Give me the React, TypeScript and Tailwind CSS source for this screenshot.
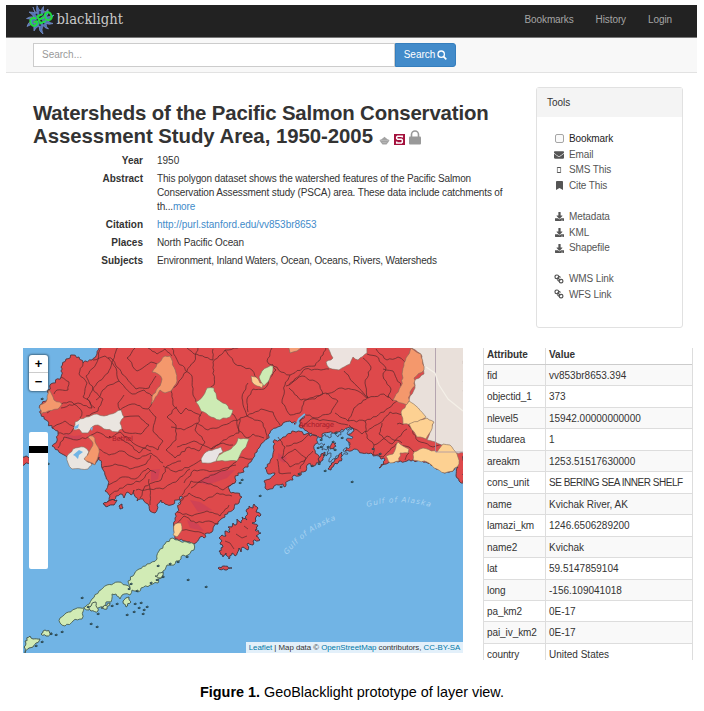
import React from "react";
import { FaEnvelope, FaBookmark, FaDownload, FaLock } from "react-icons/fa";

type Pt = [number, number];

// "x,y x,y ..." -> points
const parse = (s: string): Pt[] =>
  s.trim().split(/\s+/).map((p) => p.split(",").map(Number) as Pt);

// Subdivides every segment and displaces the new points, so borders look surveyed
function rough(s: string, amp: number, closed: boolean, step = 3): string {
  const pts = parse(s);
  const out: string[] = [];
  const n = closed ? pts.length : pts.length - 1;
  for (let i = 0; i < n; i++) {
    const [ax, ay] = pts[i];
    const [bx, by] = pts[(i + 1) % pts.length];
    const len = Math.hypot(bx - ax, by - ay) || 1;
    const k = Math.max(1, Math.round(len / step));
    for (let j = 0; j < k; j++) {
      const t = j / k;
      const x = ax + (bx - ax) * t;
      const y = ay + (by - ay) * t;
      const h = Math.sin(x * 12.9898 + y * 78.233) * 43758.5453;
      const r = j === 0 ? 0 : (h - Math.floor(h) - 0.5) * 2 * amp;
      out.push(`${(x - ((by - ay) / len) * r).toFixed(1)},${(y + ((bx - ax) / len) * r).toFixed(1)}`);
    }
  }
  if (!closed) out.push(pts[pts.length - 1].join(","));
  return out.join(" ");
}

const LAND =
  "101,346 97,354 92,360 83,363 79,357 73,355 66,359 61,367 61,377 53,383 48,390 47,400 40,405 41,414 46,420 52,428 58,431 57,441 52,446 58,450 67,457 80,452 86,462 95,464 99,457 102,468 106,477 108,485 105,491 110,496 107,502 114,500 120,494 124,498 127,492 131,495 134,490 137,501 143,499 148,504 150,511 155,513 157,505 161,500 165,504 171,505 177,500 182,496 178,508 175,518 174,530 175,539 185,541 194,544 200,537 204,538 207,533 212,532 214,526 218,524 221,519 225,517 228,512 234,509 235,504 239,503 242,497 237,493 231,493 228,487 232,484 235,483 235,478 238,473 244,472 245,467 248,467 252,460 257,452 261,444 267,439 270,433 276,428 283,423 290,421 297,423 304,415 299,426 307,431 317,436 306,434 292,431 283,437 273,442 274,450 271,459 265,468 268,474 275,473 270,479 264,481 265,488 270,489 274,486 279,485 283,484 285,487 288,481 293,480 294,475 299,476 301,472 306,471 308,464 314,466 319,463 319,456 314,449 317,443 324,433 338,432 350,427 354,431 346,437 350,445 345,451 354,449 362,453 371,453 380,457 385,460 379,468 388,463 398,462 407,461 417,461 428,463 436,469 445,473 453,471 458,467 456,476 459,481 464,483 464,346";

const SOUND =
  "318,436 322,439 325,434 329,438 333,433 338,437 344,430 353,428 347,434 353,437 346,440 350,447 343,450 348,454 336,456 329,462 331,453 326,456 328,448 322,450 325,444 318,444";

const PENINSULA =
  "173,538 180,541 187,542 194,544 194,550 188,555 183,555 181,559 176,561 174,565 167,565 163,571 163,577 158,579 158,583 150,585 141,588 138,592 132,590 130,595 124,594 120,599 116,594 112,594 111,602 106,602 104,607 98,608 95,609 94,603 89,610 84,608 82,619 73,621 65,626 60,623 60,618 66,613 75,609 85,607 92,599 99,591 107,585 118,582 126,585 130,588 128,581 133,576 139,569 147,564 157,559 159,551 165,544";

const REGIONS: { fill: string; pts: string }[] = [
  { fill: "#eae5e0", pts: "75,422 86,417 97,414 104,416 121,410 124,417 120,423 122,429 118,432 104,429 98,425 92,427 88,433 82,433 79,429 74,430" },
  { fill: "#eae5e0", pts: "67,456 73,449 84,447 89,452 86,460 92,465 88,469 72,469 68,463" },
  { fill: "#f4986c", pts: "48,390 50,391 54,400 62,404 58,409 48,411 41,414 40,405 46,402" },
  { fill: "#f4986c", pts: "88,437 93,436 99,449 98,457 95,465 84,459 90,450 93,443" },
  { fill: "#f4986c", pts: "152,372 157,364 165,356 170,356 176,373 177,381 171,391 165,393 160,390 153,402 151,404 152,397 160,386 162,379 158,374" },
  { fill: "#cdebb4", pts: "196,402 203,396 207,388 214,388 217,399 226,404 229,409 233,410 230,417 223,418 220,420 211,417 201,411" },
  { fill: "#fdcc90", pts: "251,376 256,377 260,383 264,383 262,388 257,386 252,382" },
  { fill: "#cdebb4", pts: "259,377 262,371 268,367 273,366 273,370 268,382 264,386 261,382" },
  { fill: "#e8e3e3", pts: "201,459 206,452 215,449 221,447 223,452 219,454 218,460 211,463 202,463" },
  { fill: "#cdebb4", pts: "216,461 219,455 229,450 235,445 238,438 249,439 246,447 241,453 237,461 228,461" },
  { fill: "#ece3df", pts: "326,346 330,352 333,358 326,362 329,368 339,370 350,364 353,357 358,360 367,353 367,346" },
  { fill: "#f4a078", pts: "288,346 303,346 297,351 290,353" },
  { fill: "#e9e0da", pts: "410,346 422,356 424,374 414,381 415,388 408,402 425,419 433,422 427,440 446,446 456,453 464,453 464,346" },
  { fill: "#f4986c", pts: "411,348 421,354 424,370 414,378 415,386 410,392 408,406 393,400 401,386 403,378 402,374 404,363" },
  { fill: "#fdd192", pts: "409,401 416,406 426,417 419,421 413,425 403,424 401,412" },
  { fill: "#fdd192", pts: "409,424 420,420 427,418 434,422 431,431 426,439 417,437" },
  { fill: "#fdd192", pts: "398,442 403,446 409,449 408,453 400,453 399,461 390,463 386,456 393,454" },
  { fill: "#fdd192", pts: "414,452 423,448 437,452 443,444 450,445 457,454 459,464 453,471 445,473 434,468 427,462 413,460" },
  { fill: "#fdd192", pts: "175,524 181,523 182,530 177,537 173,535" },
];

const BORDERS = [
  "83,363 79,374 87,383 83,397 90,402 92,408 78,403 61,408",
  "101,348 96,364 86,376 93,389 103,399 98,411 86,416",
  "61,377 69,382 68,390 57,390 54,394",
  "47,413 61,404 72,402 82,412 80,418",
  "52,428 65,421 75,427 69,434 58,433",
  "58,448 64,437 77,440 88,437 97,432 109,438 120,432 136,445 151,451",
  "93,360 105,356 113,360 108,373 97,383 87,399 95,408",
  "108,358 116,368 119,381 107,386 96,400",
  "118,347 113,360 122,374 136,389 149,388 156,376",
  "119,381 132,394 144,390 152,396",
  "135,348 127,358 137,371 151,362 157,364",
  "148,348 157,354 165,349 172,356",
  "124,395 118,403 120,410 132,404 148,409 152,402",
  "124,417 139,416 149,425 141,434 124,432 121,428",
  "149,409 156,417 153,431 163,441 158,450 147,445 139,453 128,443 119,438",
  "99,449 109,455 122,451 137,459 151,453 163,463",
  "102,468 115,464 130,469 146,464 151,455",
  "108,485 122,477 135,479 148,468 156,473",
  "110,495 125,486 142,480 151,470",
  "136,490 150,489 149,479",
  "140,498 145,486 161,480 167,466 181,461",
  "150,505 150,489 163,489 178,480 190,469",
  "172,348 178,362 192,376 193,395 196,402",
  "198,347 194,362 179,381 171,391 173,405 181,414 186,408 201,416",
  "187,348 194,354 213,360 213,349",
  "240,347 225,350 213,362 214,385 207,392",
  "225,350 235,364 252,370 257,378",
  "272,348 267,361 276,370 264,389 253,389 247,399 248,412",
  "248,383 242,398 247,416 261,409 273,412 280,425",
  "240,418 247,416 263,423 267,439",
  "240,418 239,431 247,438 253,434 264,438",
  "229,409 237,420 239,433 231,436 211,449",
  "202,412 195,430 205,442 199,451 189,447 175,458 166,450 176,440 176,425 167,417 177,407",
  "171,427 184,430 197,423 208,430 221,426 240,419",
  "177,447 194,441 211,449 223,443 233,445",
  "163,466 176,472 191,466 201,460",
  "184,483 194,470 216,471 231,466 240,457 252,459",
  "191,488 205,478 219,472 236,465",
  "182,495 191,481 211,484 223,490 233,483",
  "178,504 189,493 204,501 217,493 232,496",
  "177,512 192,516 207,511 220,516 229,505",
  "174,525 184,516 196,523 209,521 218,524",
  "180,530 192,531 204,534",
  "272,364 281,372 290,375 285,385 282,403 290,415 300,413",
  "290,375 305,367 315,366 323,355 326,347",
  "289,385 305,369 321,370 329,369",
  "286,386 302,376 318,383 323,394 315,399 301,400 289,388",
  "300,413 304,401 316,396 326,393 338,401 331,413 315,418 304,414",
  "326,394 342,388 358,391 368,398 384,394 393,401",
  "344,371 353,382 368,397 354,408 348,421 335,413",
  "363,358 371,367 365,383 368,398",
  "367,354 376,356 386,368 383,376 391,389 388,398",
  "376,349 387,360 398,357 406,363",
  "383,369 393,371 401,386",
  "348,421 365,421 384,412 398,400",
  "349,425 362,434 380,423 390,412 402,415",
  "365,421 367,438 374,445 387,436 402,443",
  "382,423 379,434 392,444 407,429",
  "397,424 408,423 418,441 433,447 443,444",
  "374,445 373,456 383,457 396,444 409,447 414,452",
  "409,453 405,460",
  "433,452 428,464",
  "442,449 434,463",
  "456,457 444,459 439,470",
  "278,437 285,447 282,458 290,467 304,461 313,451",
  "286,446 302,441 312,433",
  "281,458 295,449 306,458 300,469",
  "277,459 279,473 291,473",
  "302,427 311,419 332,421 348,425",
];

const ISLANDS_RED = [
  "246,511 249,506 253,508 254,504 258,508 256,512 261,515 256,517 256,521 252,523 258,526 255,530 261,533 256,536 260,540 253,541 253,545 248,543 248,550 243,547 241,552 239,548 235,556 232,553 229,559 226,553 223,557 219,551 223,547 220,544 222,541 219,538 222,535 226,536 225,531 230,532 228,527 232,527 233,523 236,525 237,519 241,523 242,517 247,520",
  "218,568 224,566 232,568 225,570",
  "103,504 111,500 117,500 114,505 105,506",
  "119,506 122,504 123,508 120,509",
  "328,469 335,459 342,452 342,459 334,465 331,470",
  "318,459 321,454 325,452 323,460 320,463",
  "330,449 333,442 336,443 334,449",
  "20,456 28,457 30,463 22,465",
];
const ISLANDS_GREEN = [
  "25,641 30,636 33,639 40,639 36,643 33,647 29,648 25,653",
  "41,634 45,630 52,633 46,636",
  "123,601 129,597 131,602 126,607",
  "88,607 96,602 98,611 91,611",
  "101,608 110,603 107,609",
  "155,576 163,572 161,578",
];
const ISLETS =
  "91,624 97,627 127,615 135,604 141,603 139,608 144,610 147,607 134,612 112,606 117,604 158,566 170,564 178,562 187,557 188,580 206,587 98,614 143,614 242,480 240,483 260,496 321,447 352,482 51,634 62,632 56,635 151,583 157,580 163,577 82,598 88,607 131,584 129,589 137,591 42,642 36,646 281,487 299,474 312,466 319,464 325,471 373,449 380,454 336,433 342,438 333,442 328,447 335,450 321,440 318,448 324,455 48,464 42,399";

const TOOLS = [
  [["check", "Bookmark"], ["mail", "Email"], ["phone", "SMS This"], ["mark", "Cite This"]],
  [["down", "Metadata"], ["down", "KML"], ["down", "Shapefile"]],
  [["link", "WMS Link"], ["link", "WFS Link"]],
];

const ROWS = [
  ["fid", "vv853br8653.394"], ["objectid_1", "373"], ["nlevel5", "15942.00000000000"],
  ["studarea", "1"], ["areakm", "1253.51517630000"], ["cons_unit", "SE BERING SEA INNER SHELF"],
  ["name", "Kvichak River, AK"], ["lamazi_km", "1246.6506289200"], ["name2", "Kvichak"],
  ["lat", "59.5147859104"], ["long", "-156.109041018"], ["pa_km2", "0E-17"],
  ["pai_iv_km2", "0E-17"], ["country", "United States"],
];

function Logo() {
  return (
    <svg className="h-8 w-[100px]" viewBox="26 5 100 32">
      <path
        d="M33 7Q34 12 37 13 36 9 37 5.500 38.500 10 41 11 42 8 43.500 6.500 43 10 44.500 12 47 11 48 9 49 14 46 17 50 17 54 15 50 20 47.500 20.500 50 23 53 23.500 49 25 46 23.500 46 27 48.500 29 44.500 28 43 25.500 41 30 43 34 38.500 31 39 26 36 27 34 31 33 27 35 24 31 24 27 26.500 28 22 32 21 29 18 26.500 18.500 30 16 34 17 32 14 29 12 33.500 12 35 13Z"
        fill="#5573b4" stroke="#7f9ddc" strokeWidth=".6"
      />
      <path d="M36 14 44 24M35 22l10-9M40 11v15" stroke="#222" strokeWidth="1.300" />
      <text x="31.500" y="27.500" transform="rotate(-22 31.500 27.500)" fontFamily="Liberation Sans, sans-serif" fontWeight="400" fontSize="12.500" textLength="24" lengthAdjust="spacingAndGlyphs" fill="#1fdc3f" stroke="#1fdc3f" strokeWidth=".9">GEO</text>
      <text x="56.500" y="24" fontFamily="DejaVu Serif, serif" fontSize="14.200" textLength="66.500" lengthAdjust="spacingAndGlyphs" fill="#c9c9c9">blacklight</text>
    </svg>
  );
}

function ToolIcon({ kind }: { kind: string }) {
  switch (kind) {
    case "check":
      return <span className="block size-[9px] rounded-[2px] border border-[#a5a5a5] bg-[#fafafa]" />;
    case "mail":
      return <FaEnvelope size={10} />;
    case "phone":
      return (
        <svg width="6" height="8" viewBox="0 0 6 8">
          <path d="M1 1.500h4M1 6.500h4" stroke="#555" strokeWidth="1.200" />
          <path d="M1.400 1v6M4.600 1v6" stroke="#777" strokeWidth=".8" />
        </svg>
      );
    case "mark":
      return <FaBookmark size={9} preserveAspectRatio="none" className="h-[9px] w-[7px]" />;
    case "down":
      return <FaDownload size={9} />;
    default:
      return (
        <svg width="10" height="10" viewBox="0 0 10 10" fill="none" stroke="#555" strokeWidth="1.200">
          <rect x="1" y="1" width="3.600" height="3.600" rx="1.600" />
          <rect x="5.300" y="5.300" width="3.600" height="3.600" rx="1.600" />
          <path d="M3.500 3.500 6.400 6.400M5 2.200l1.500 1.300M3.300 5.400l1.500 2" />
        </svg>
      );
  }
}

function MapView() {
  const islets = parse(ISLETS);
  return (
    <div className="relative h-[305px] w-[440px] shrink-0 overflow-hidden bg-[#71b4e5]">
      <svg className="block h-full w-full" viewBox="23 348 440 305" strokeLinejoin="round">
        <defs>
          <path id="gulfWest" d="M287 555Q307 529 341 518" />
          <path id="gulfEast" d="M367 507Q402 497 433 508" />
        </defs>
        <polygon points={rough(LAND, 1.5, true, 2.2)} fill="#de494b" stroke="#553238" strokeWidth=".9" />
        <g fill="#c43d5c" opacity=".55">
          <path d="M198 482l12-8 13-3 12-1-8 8-20 7ZM64 434l10 2 8-1-3 5-12-1ZM151 470l9-1-2 10-7 3ZM278 453l9 5-3 5-6-4ZM190 500l10 2 12 8-14 2ZM187 520l11 4 6 7-14-3Z" />
        </g>
        {BORDERS.map((b, i) => (
          <polyline key={i} points={rough(b, 0.9, false)} fill="none" stroke="#5d2b2e" strokeWidth=".75" />
        ))}
        {REGIONS.map((r, i) => (
          <polygon key={i} points={rough(r.pts, 0.8, true)} fill={r.fill} stroke="#80695a" strokeWidth=".6" />
        ))}
        <path d="M435.500 348V452H463" fill="none" stroke="#a795a4" strokeWidth=".8" />
        <path d="M426 367l9 6 4 12 9 14 15 12" fill="none" stroke="#f4f0e8" strokeWidth="1.200" />
        <path d="M74 427l5-3-1 4-3 1ZM73 455l6-5 4 2-4 3-1 4-3-3ZM90 428l3-1-1 4Z" fill="#71b4e5" />
        <path d="M297 423l2-4 6-5" fill="none" stroke="#71b4e5" strokeWidth="1.800" />
        <polygon points={rough(SOUND, 1.4, true, 2)} fill="#71b4e5" stroke="#3b4256" strokeWidth=".8" />
        <polygon points={rough(PENINSULA, 1.2, true, 2.5)} fill="#d1ebb5" stroke="#4b6152" strokeWidth=".9" />
        {ISLANDS_RED.map((s, i) => (
          <polygon key={i} points={rough(s, 1.2, true, 1.8)} fill="#de494b" stroke="#3f303c" strokeWidth=".9" />
        ))}
        {ISLANDS_GREEN.map((s, i) => (
          <polygon key={i} points={rough(s, 1.2, true, 2)} fill="#d1ebb5" stroke="#3f5148" strokeWidth=".9" />
        ))}
        <path d="M225 541l5 2 4 6M236 534l6 4 5-2M244 526l4 3" fill="none" stroke="#5d2b2e" strokeWidth=".7" />
        {islets.map(([x, y], i) => (
          <path key={i} d={`M${x - 1.2} ${y}l1.500-.9 1.200.8-1.500 1Z`} fill="#4a6b62" stroke="#25404e" strokeWidth=".8" />
        ))}
        <g fontFamily="DejaVu Sans, sans-serif" fontSize="7" fill="#a51d2b">
          <text x="299" y="427" textLength="35">Anchorage</text>
          <text x="112" y="440.500" textLength="21">Bethel</text>
        </g>
        <path d="M294 423h1.500v1.500H294ZM109 436h1.500v1.500H109Z" fill="#7b1823" />
        <g fontFamily="DejaVu Sans, sans-serif" fontStyle="italic" fontSize="7.500" fill="#a9d3f1">
          <text textLength="61"><textPath href="#gulfWest">Gulf of Alaska</textPath></text>
          <text textLength="64"><textPath href="#gulfEast">Gulf of Alaska</textPath></text>
        </g>
      </svg>
      <div className="absolute left-[6px] top-[7px] h-[36px] w-[19px] rounded-[3px] bg-white text-center text-[13px] font-bold leading-[18px] text-black shadow-[0_0_2px_1px_rgba(0,0,0,0.4)]">
        <div className="h-[18px] border-b border-[#ccc]">+</div>
        <div className="h-[18px] leading-[17px]">−</div>
      </div>
      <div className="absolute left-[6px] top-[84px] h-[137px] w-[19px] rounded-[2px] bg-white pt-[14px]">
        <div className="h-[7px] bg-black" />
      </div>
      <div className="absolute bottom-0 right-0 flex h-[11px] w-[217px] items-center justify-center whitespace-pre bg-white/80 text-[7.9px] tracking-[-0.04px] text-[#333]">
        <span className="text-[#0078a8]">Leaflet</span> | Map data © <span className="text-[#0078a8]">OpenStreetMap</span> contributors, <span className="text-[#0078a8]">CC-BY-SA</span>
      </div>
    </div>
  );
}

function Field({ name, children }: { name: string; children: React.ReactNode }) {
  return (
    <div className="mb-1 flex">
      <dt className="w-[110px] shrink-0 text-right font-bold">{name}</dt>
      <dd className="ml-[14px] whitespace-nowrap">{children}</dd>
    </div>
  );
}

export default function App() {
  return (
    <div className="h-[711px] w-[704px] overflow-hidden bg-white pt-[5px] font-['Liberation_Sans',Arial,sans-serif] text-[10px] leading-[14px] text-[#333]">
      <div className="ml-[6px] w-[691px]">
        <header className="flex h-[33px] items-start justify-between border-b border-[#777] bg-[#222] pl-5 pr-[25px]">
          <Logo />
          <nav className="flex gap-[22px] pt-2 tracking-[-0.1px] text-[#a5a5a5]">
            <a>Bookmarks</a>
            <a>History</a>
            <a>Login</a>
          </nav>
        </header>
        <div className="flex h-[35px] items-start border-b border-[#e2e2e2] bg-[#f8f8f8] pl-[27px] pt-[5px]">
          <div className="flex h-6 w-[362px] items-center border border-[#ccc] bg-white pl-2 text-[#999]">Search...</div>
          <button className="flex h-6 w-[61px] items-center justify-center gap-[2px] rounded-r-[3px] border border-[#357ebd] bg-[#428bca] text-white">
            Search
            <svg width="10" height="10" viewBox="0 0 10 10" fill="none" stroke="#fff">
              <circle cx="4.200" cy="4.200" r="3.200" strokeWidth="1.300" />
              <path d="M6.600 6.600 9.300 9.300" strokeWidth="1.700" />
            </svg>
          </button>
        </div>
        <div className="flex h-[275px] items-start">
          <main className="w-[530px] pl-[27px] pt-[29px]">
            <h1 className="whitespace-nowrap text-[20.4px] font-bold leading-[23px]">
              <span className="tracking-[-0.16px]">Watersheds of the Pacific Salmon Conservation</span>
              <br />
              <span className="flex items-start tracking-[-0.05px]">
                Assessment Study Area, 1950-2005
                <svg className="ml-[6px] mt-[11px] h-[9px] w-[11px]" viewBox="0 0 10 9">
                  <path d="M0 4 2 3.200 5 .8l3 2.400 2 .8-1 2-2 2.500H3L1 6Z" fill="#a3a3a3" />
                  <path d="M1 4.500h8M3 6.500h4" stroke="#bdbdbd" strokeWidth=".7" />
                </svg>
                <svg className="ml-1 mt-[9px] size-[11px]" viewBox="0 0 11 11">
                  <path d="M0 0h11v11H0Z" fill="#a4103c" />
                  <path d="M8.300 3.600V2.200H3.500L2.700 3V4.500L3.500 5.300H7.500L8.300 6V8.200L7.500 8.900H2.700V7.500" fill="none" stroke="#fff" strokeWidth="1.500" />
                </svg>
                <svg className="ml-1 mt-[5px] h-[15px] w-3" viewBox="0 0 12 15">
                  <path d="M2.500 7V4.500a3.500 3.500 0 0 1 7 0V7" fill="none" stroke="#999" strokeWidth="1.600" />
                  <rect x="0" y="6.500" width="12" height="8" rx="1" fill="#999" />
                </svg>
              </span>
            </h1>
            <dl className="mt-[6px]">
              <Field name="Year">1950</Field>
              <Field name="Abstract">
                <span className="tracking-[-0.15px]">
                  This polygon dataset shows the watershed features of the Pacific Salmon<br />
                  Conservation Assessment study (PSCA) area. These data include catchments of<br />
                  th...<a className="text-[#428bca]">more</a>
                </span>
              </Field>
              <Field name="Citation"><a className="tracking-[-0.03px] text-[#428bca]">http://purl.stanford.edu/vv853br8653</a></Field>
              <Field name="Places"><span className="tracking-[-0.1px]">North Pacific Ocean</span></Field>
              <Field name="Subjects"><span className="tracking-[-0.175px]">Environment, Inland Waters, Ocean, Oceans, Rivers, Watersheds</span></Field>
            </dl>
          </main>
          <aside className="mt-[14px] h-[241px] w-[147px] rounded-[3px] border border-[#e1e1e1]">
            <h2 className="flex h-[29px] items-center bg-[#f4f4f4] pl-[10px]">Tools</h2>
            <div className="flex flex-col gap-[15px] pt-[14px] leading-[15.7px] tracking-[-0.12px] text-[#555]">
              {TOOLS.map((group, i) => (
                <ul key={i}>
                  {group.map(([kind, label]) => (
                    <li key={label} className={kind === "check" ? "flex text-[#222]" : "flex"}>
                      <span className="ml-4 mr-1 flex w-3 items-center justify-center text-[#555]"><ToolIcon kind={kind} /></span>
                      {label}
                    </li>
                  ))}
                </ul>
              ))}
            </div>
          </aside>
        </div>
        <div className="flex h-[312px] items-start pl-[17px]">
          <MapView />
          <div className="ml-5 h-[312px] w-[210px] overflow-hidden border-x border-[#ddd]">
            <div className="flex h-[17px] border-b border-[#ccc] font-bold leading-[13px]">
              <div className="w-[62px] border-r border-[#ddd] pl-[3px] tracking-[-0.1px]">Attribute</div>
              <div className="pl-[3px]">Value</div>
            </div>
            {ROWS.map(([k, v], i) => (
              <div key={k} className={`flex h-[21.46px] border-b border-[#ddd] leading-[22px] ${i % 2 ? "bg-white" : "bg-[#f9f9f9]"}`}>
                <div className="w-[62px] shrink-0 border-r border-[#ddd] pl-[3px] tracking-[-0.08px]">{k}</div>
                <div className={`whitespace-nowrap pl-[3px] ${k === "cons_unit" ? "tracking-[-0.48px]" : ""}`}>{v}</div>
              </div>
            ))}
          </div>
        </div>
      </div>
      <p className="pt-[24px] text-center text-[14.4px] leading-4 text-black"><b>Figure 1.</b> GeoBlacklight prototype of layer view.</p>
    </div>
  );
}
